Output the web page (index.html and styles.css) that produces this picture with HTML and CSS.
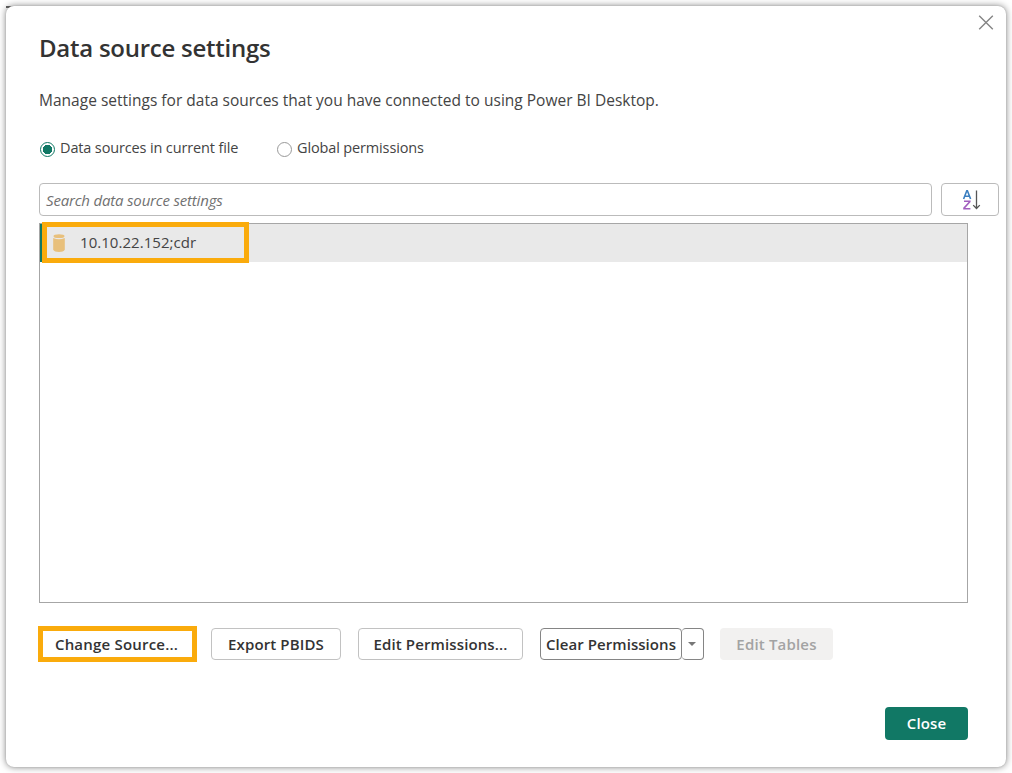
FILE: index.html
```html
<!DOCTYPE html>
<html lang="en">
<head>
<meta charset="utf-8">
<title>Data source settings</title>
<link rel="stylesheet" href="styles.css">
</head>
<body>
<span class="backdrop-corner"></span>
<main class="dialog">
  <button class="dismiss" aria-label="Close dialog"><svg width="16" height="16" viewBox="0 0 16 16"><path d="M1.2 1.7l13.6 13.6M14.8 1.7L1.2 15.3"/></svg></button>
  <h1 class="title"><span>Data source settings</span></h1>
  <p class="intro"><span>Manage settings for data sources that you have connected to using Power BI Desktop.</span></p>
  <div class="scopes">
    <label class="scope scope-current"><i class="radio radio-on"></i><span>Data sources in current file</span></label>
    <label class="scope scope-global"><i class="radio"></i><span>Global permissions</span></label>
  </div>
  <div class="search-row">
    <div class="search"><span>Search data source settings</span></div>
    <button class="sort" aria-label="Sort">
      <svg width="20" height="22" viewBox="0 0 20 22"><path class="sort-a" d="M2.6 10L5.8 1.7h.6L9.6 10M3.8 7.3h4.6"/><path class="sort-z" d="M3 12.3h5.8v.5L3 19.1v.6h6.4"/><path class="sort-arrow" d="M15.5 1.5v18M12.2 16.1l3.3 3.4 3.3-3.4"/></svg>
    </button>
  </div>
  <div class="list">
    <div class="item">
      <svg class="database" width="12" height="18" viewBox="0 0 12 18"><path d="M.2 4.1Q6 6.6 11.8 4.1V15.8Q10.5 18 6 18T.2 15.8Z"/><ellipse cx="6" cy="2.2" rx="5.5" ry="1.9"/></svg>
      <span>10.10.22.152;cdr</span>
    </div>
    <div class="highlight"></div>
  </div>
  <div class="actions">
    <button class="button change"><span>Change Source...</span></button>
    <button class="button export"><span>Export PBIDS</span></button>
    <button class="button edit"><span>Edit Permissions...</span></button>
    <div class="split">
      <button class="button clear"><span>Clear Permissions</span></button>
      <button class="button arrow" aria-label="More"><i class="caret"></i></button>
    </div>
    <button class="button tables" disabled><span>Edit Tables</span></button>
  </div>
  <div class="footer"><button class="button close"><span>Close</span></button></div>
</main>
</body>
</html>
```
FILE: styles.css
```css
* { box-sizing: border-box; }
body {
  margin: 0;
  padding: 6px;
  height: 773px;
  overflow: hidden;
  background: #fff;
  color: #444;
  font: 15px/20px "Open Sans", "Noto Sans", sans-serif;
}
button { margin: 0; padding: 0; font: inherit; color: inherit; background: none; border: 0; }
span { white-space: nowrap; }
.backdrop-corner { position: absolute; left: 6px; top: 6px; width: 8px; height: 2px; background: #666; }
.dialog {
  position: relative;
  display: flex;
  flex-direction: column;
  width: 1000px;
  height: 761px;
  padding: 26px 7px 27px 33px;
  background: #fff;
  border-radius: 8px;
  box-shadow: 0 0 1px #999, 0 0 7px rgba(0, 0, 0, .5);
}
.dismiss { position: absolute; left: 972px; top: 8px; width: 16px; height: 16px; }
.dismiss svg { display: block; fill: none; stroke: #858585; stroke-width: 1.4; }
.title { margin: 0; height: 32px; font-size: 24px; line-height: 32px; font-weight: 600; color: #333; }
.title span { letter-spacing: -.25px; }
.intro { margin: 20px 0 0; height: 32px; line-height: 32px; font-size: 15.5px; letter-spacing: .01px; }
.scopes { display: flex; height: 20px; margin-top: 22px; font-size: 14.5px; letter-spacing: -.14px; }
.scope { display: flex; align-items: center; gap: 5px; }
.scope-current { width: 238px; padding-left: 1px; }
.radio { position: relative; top: 1px; flex: none; width: 15px; height: 15px; border: 1px solid #999; border-radius: 50%; }
.radio-on { border: 1.5px solid #117865; background: radial-gradient(circle, #117865 4.5px, #fff 5px); }
.search-row { display: flex; gap: 9px; margin-top: 25px; height: 33px; }
.search { width: 893px; padding-left: 6px; border: 1px solid #bbb; border-radius: 4px; line-height: 33px; font-size: 15px; letter-spacing: -.18px; font-style: italic; color: #717171; }
.sort { display: flex; align-items: center; justify-content: center; width: 58px; padding-left: 1px; border: 1px solid #bbb; border-radius: 4px; }
.sort svg { fill: none; stroke-width: 1.6; }
.sort-a { stroke: #3b7fc0; }
.sort-z { stroke: #a25fbf; }
.sort-arrow { stroke: #555; stroke-width: 1.3; }
.list { position: relative; width: 929px; height: 380px; margin-top: 7px; border: 1px solid #a6a6a6; }
.item { display: flex; align-items: center; gap: 15px; height: 38px; padding-left: 10px; border-left: 3px solid #117865; background: #e9e9e9; }
.item span { margin-top: -2px; letter-spacing: .05px; }
.database { fill: #e8c07c; }
.highlight { position: absolute; left: 2px; top: -2px; width: 207px; height: 41px; border: 5px solid #faab0c; }
.actions { display: flex; align-items: center; height: 36px; margin: 23px 0 0 -1px; }
.button { display: flex; align-items: center; justify-content: center; height: 32px; border: 1px solid #c2c2c2; border-radius: 4px; font-weight: 600; color: #333; letter-spacing: .12px; }
.change { width: 159px; height: 36px; padding-right: 2px; border: 5px solid #faab0c; border-radius: 0; letter-spacing: .2px; }
.export { width: 130px; margin-left: 14px; }
.edit { width: 165px; margin-left: 17px; }
.split { display: flex; margin-left: 17px; }
.clear { width: 142px; border-color: #858585; letter-spacing: .06px; }
.arrow { width: 22px; padding-right: 2px; border-color: #858585; border-left-width: 0; }
.caret { border: 4px solid transparent; border-top-color: #777; border-bottom-width: 0; }
.tables { width: 113px; margin-left: 16px; border: 0; background: #f2f1f0; color: #a3a3a3; letter-spacing: .18px; }
.footer { display: flex; justify-content: flex-end; margin: auto 31px 0 0; }
.close { width: 83px; height: 33px; padding-bottom: 1px; border: 0; background: #117865; color: #fff; }
```
